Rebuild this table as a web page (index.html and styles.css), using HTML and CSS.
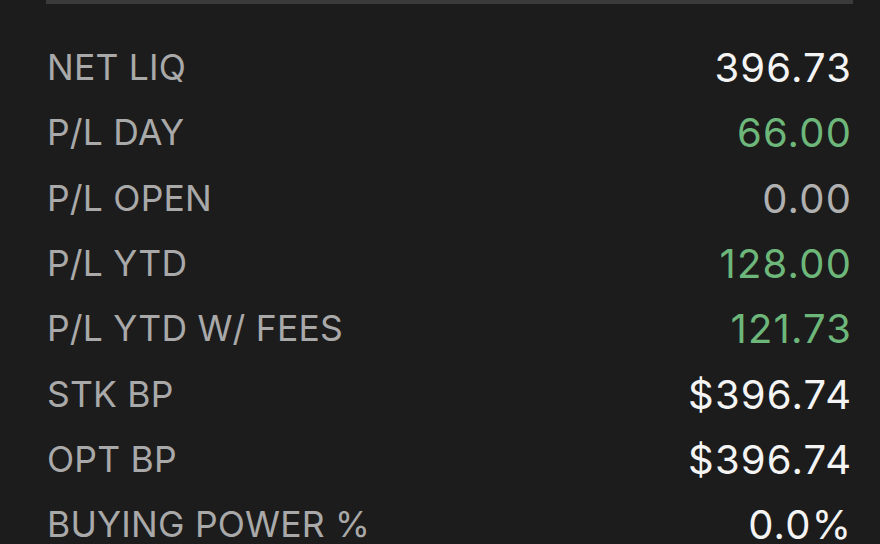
FILE: index.html
```html
<!DOCTYPE html>
<html lang="en">
<head>
    <meta charset="UTF-8">
    <meta name="viewport" content="width=device-width, initial-scale=1.0">
    <title>Account</title>
    <link rel="stylesheet" href="styles.css">
</head>
<body>

<div class="top-bar"></div>

<div class="balances">
    <div class="row"><span class="label">NET LIQ</span><span class="value">396.73</span></div>
    <div class="row"><span class="label">P/L DAY</span><span class="value up">66.00</span></div>
    <div class="row"><span class="label">P/L OPEN</span><span class="value flat">0.00</span></div>
    <div class="row"><span class="label">P/L YTD</span><span class="value up">128.00</span></div>
    <div class="row"><span class="label">P/L YTD W/ FEES</span><span class="value up">121.73</span></div>
    <div class="row"><span class="label">STK BP</span><span class="value">$396.74</span></div>
    <div class="row"><span class="label">OPT BP</span><span class="value">$396.74</span></div>
    <div class="row"><span class="label">BUYING POWER %</span><span class="value">0.0%</span></div>
</div>

</body>
</html>
```

FILE: styles.css
```css
body {
    background: #1c1c1c;
    font-family: Inter, "Noto Sans", sans-serif;
    margin: 0;
    padding: 0;
    overflow: hidden;
}

.top-bar {
    height: 4px;
    margin: 0 27px 0 46px;
    background: #3a3a3a;
}

.balances {
    padding: 31px 29px 0 47px;
}

.row {
    display: flex;
    justify-content: space-between;
    align-items: center;
    height: 65.3px;
}

.label {
    color: #a9a9a9;
    font-size: 35.5px;
    letter-spacing: 0.2px;
}

.value {
    color: #f4f4f4;
    font-size: 40px;
    letter-spacing: 1.2px;
    margin-right: -1.2px;
}

.value.up {
    color: #6db77b;
}

.value.flat {
    color: #b0b0b0;
}
```
